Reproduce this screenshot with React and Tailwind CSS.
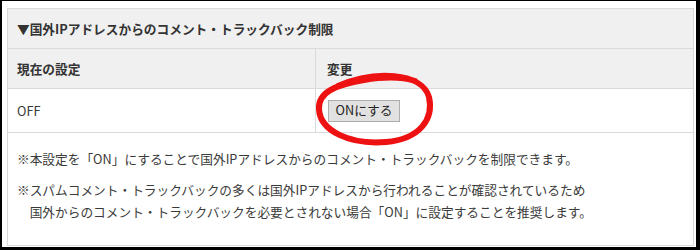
import React from 'react';

const font = { fontFamily: '"Noto Sans CJK JP", "Noto Sans", sans-serif' };

export default function App() {
    return (
        <div
            className="relative w-[700px] h-[250px] bg-white border-l-2 border-t border-r-4 border-b-[3px] border-black pl-[5px] pt-[7px] text-[#3a3a3a] text-[12.7px]"
            style={font}
        >
            <div className="w-[687px] border border-[#dadada]">
                {/* Title */}
                <div className="h-[40px] flex items-center px-[9px] bg-[#f0f0f0] border-b border-[#dadada] font-bold text-[#333]">
                    ▼国外IPアドレスからのコメント・トラックバック制限
                </div>

                {/* Table */}
                <div className="grid grid-cols-[308px_1fr]">
                    <div className="h-[40px] flex items-center px-[9px] bg-[#f0f0f0] border-b border-r border-[#dadada] font-bold text-[#333]">
                        現在の設定
                    </div>
                    <div className="h-[40px] flex items-center px-[11px] bg-[#f0f0f0] border-b border-[#dadada] font-bold text-[#333]">
                        変更
                    </div>
                    <div className="h-[44px] flex items-center px-[9px] border-b border-r border-[#dadada]">
                        OFF
                    </div>
                    <div className="h-[44px] flex items-center px-[12px] border-b border-[#dadada]">
                        <button
                            type="button"
                            className="w-[72px] h-[22px] bg-[#e1e1e1] border border-[#adadad] text-[12.7px] text-[#222] leading-none"
                        >
                            ONにする
                        </button>
                    </div>
                </div>

                {/* Notes */}
                <div className="px-[9px] pt-[15px] pb-[22px] leading-[22px]">
                    <p>※本設定を「ON」にすることで国外IPアドレスからのコメント・トラックバックを制限できます。</p>
                    <p className="mt-[9px] pl-[1em] -indent-[1em]">
                        ※スパムコメント・トラックバックの多くは国外IPアドレスから行われることが確認されているため
                        <br />
                        国外からのコメント・トラックバックを必要とされない場合「ON」に設定することを推奨します。
                    </p>
                </div>
            </div>

            {/* red hand-drawn circle */}
            <svg className="absolute left-0 top-0 pointer-events-none" width="700" height="250" viewBox="0 0 700 250">
                <path
                    d="M 336 85 C 372 69, 420 71, 427 96 C 432 118, 418 138, 384 141 C 348 144, 318 130, 317 108 C 316 92, 332 84, 362 79 C 380 76, 398 75, 413 80"
                    fill="none"
                    stroke="#ee1111"
                    strokeWidth="6"
                    strokeLinecap="round"
                    strokeLinejoin="round"
                />
            </svg>
        </div>
    );
}
